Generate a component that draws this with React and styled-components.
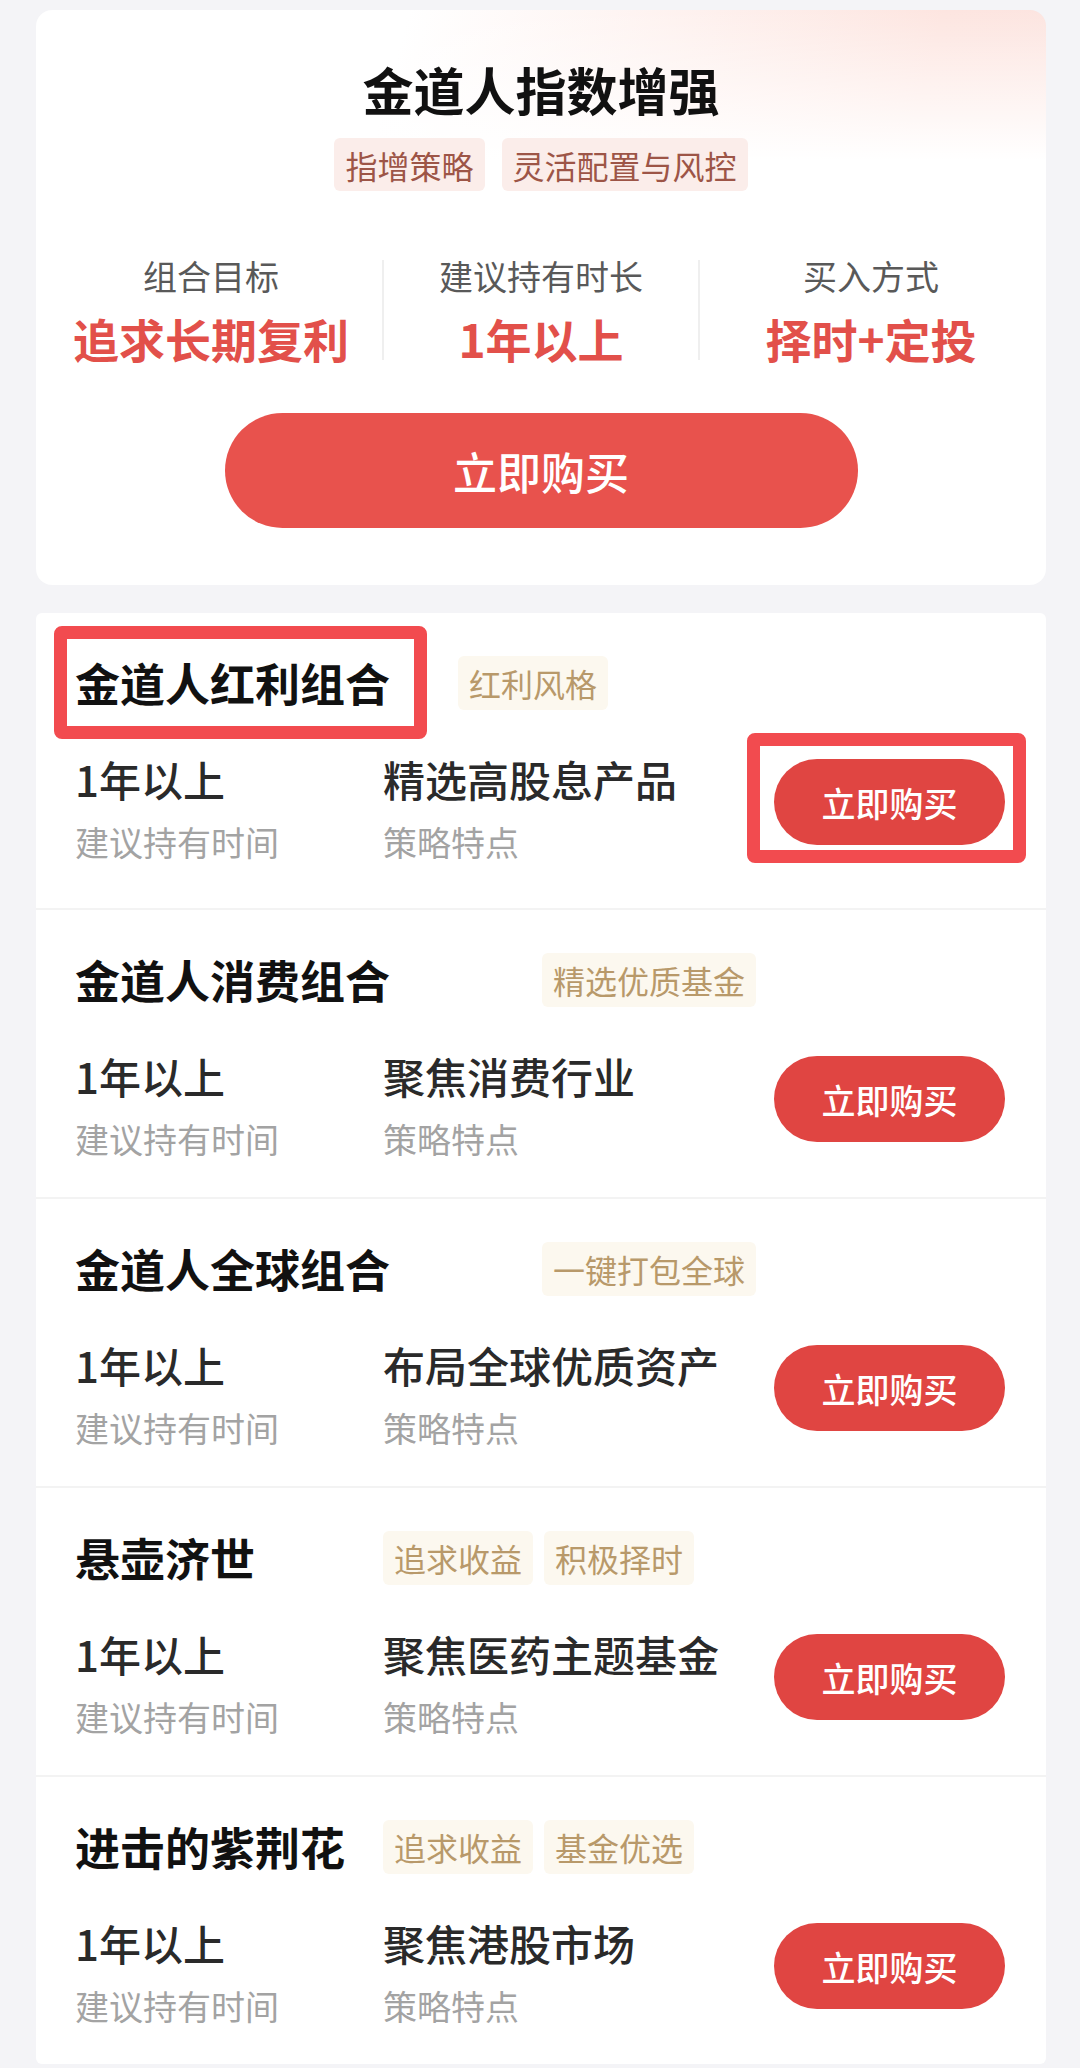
import React from 'react';
import styled, { createGlobalStyle } from 'styled-components';

const GlobalStyle = createGlobalStyle`
  html, body { margin: 0; padding: 0; background: #f4f4f7; }
  body {
    font-family: "Noto Sans CJK SC", "Noto Sans", sans-serif;
    -webkit-font-smoothing: antialiased;
  }
  * { box-sizing: border-box; }
`;

const Page = styled.div`
  width: 1080px;
  min-height: 2068px;
  padding: 10px 34px 0 36px;
  display: flex;
  flex-direction: column;
  gap: 28px;
  background: #f4f4f7;
`;

const HeroCard = styled.section`
  border-radius: 16px;
  padding: 44px 32px 57px;
  display: flex;
  flex-direction: column;
  align-items: center;
  background:
    linear-gradient(180deg, rgba(255, 255, 255, 0) 0px, #ffffff 150px),
    linear-gradient(105deg, #ffffff 32%, #fde5e0 78%, #fbe4e0 100%);
`;

const HeroTitle = styled.h1`
  margin: 0;
  font-size: 51px;
  line-height: 70px;
  font-weight: 700;
  color: #111;
`;

const TagRow = styled.div`
  display: flex;
  gap: ${(p) => p.$gap}px;
  margin-top: ${(p) => p.$top || 0}px;
  margin-left: ${(p) => p.$offset || 0}px;
`;

const Tag = styled.span`
  display: inline-flex;
  align-items: center;
  height: ${(p) => (p.$tone === 'rose' ? 53 : 54)}px;
  padding: 0 11px;
  border-radius: 6px;
  font-size: 32px;
  font-weight: 400;
  white-space: nowrap;
  color: ${(p) => (p.$tone === 'rose' ? '#9d5547' : '#b8996a')};
  background: ${(p) => (p.$tone === 'rose' ? '#fbedea' : '#fcf8ef')};
`;

const Stats = styled.div`
  width: 100%;
  margin-top: 61px;
  display: grid;
  grid-template-columns: 1fr 2px 1fr 2px 1fr;
  align-items: center;
`;

const Stat = styled.div`
  display: flex;
  flex-direction: column;
  align-items: center;
  padding: ${(p) =>
    p.$edge === 'start' ? '0 28px 0 0' : p.$edge === 'end' ? '0 0 0 28px' : '0'};
`;

const StatLabel = styled.div`
  font-size: 34px;
  line-height: 48px;
  color: #595959;
`;

const StatValue = styled.div`
  margin-top: 8px;
  font-size: 46px;
  line-height: 60px;
  font-weight: 700;
  color: #e2504a;
  white-space: nowrap;
`;

const StatDivider = styled.div`
  width: 2px;
  height: 100px;
  background: #efefef;
`;

const HeroButton = styled.button`
  margin-top: 45px;
  width: 633px;
  height: 115px;
  border: none;
  border-radius: 58px;
  background: #e8524d;
  color: #fff;
  font-family: inherit;
  font-size: 44px;
  font-weight: 500;
`;

const ListCard = styled.section`
  background: #fff;
  border-radius: 6px;
  display: flex;
  flex-direction: column;
`;

const Row = styled.div`
  padding: 38px 41px 34px 39px;
  border-bottom: 2px solid #f3f3f3;
  &:first-child { padding-bottom: 42px; }
  &:last-child { border-bottom: none; }
`;

const TitleLine = styled.div`
  display: flex;
  align-items: center;
  height: 64px;
`;

const TitleCell = styled.div`
  position: relative;
  display: flex;
  align-items: center;
  min-width: 308px;
`;

const ItemTitle = styled.h2`
  margin: 0;
  font-size: 45px;
  line-height: 64px;
  font-weight: 700;
  color: #111;
  white-space: nowrap;
`;

const Body = styled.div`
  display: grid;
  grid-template-columns: 308px 1fr 231px;
  margin-top: 36px;
`;

const Col = styled.div`
  display: flex;
  flex-direction: column;
`;

const Value = styled.div`
  font-size: 42px;
  line-height: 56px;
  font-weight: 500;
  color: #2a2a2a;
  white-space: nowrap;
`;

const Sub = styled.div`
  margin-top: 11px;
  font-size: 34px;
  line-height: 48px;
  color: #a3a3a3;
`;

const ButtonCell = styled.div`
  position: relative;
  align-self: start;
  margin-top: 8px;
`;

const RowButton = styled.button`
  display: block;
  width: 231px;
  height: 86px;
  border: none;
  border-radius: 43px;
  background: #e04542;
  color: #fff;
  font-family: inherit;
  font-size: 34px;
  font-weight: 500;
`;

const Frame = styled.span`
  position: absolute;
  top: ${(p) => p.$t}px;
  right: ${(p) => p.$r}px;
  bottom: ${(p) => p.$b}px;
  left: ${(p) => p.$l}px;
  border: 13px solid #f24b4f;
  border-radius: 8px;
  pointer-events: none;
`;

const items = [
  {
    title: '金道人红利组合',
    tags: ['红利风格'],
    offset: 68,
    feature: '精选高股息产品',
    marked: true,
  },
  { title: '金道人消费组合', tags: ['精选优质基金'], offset: 152, feature: '聚焦消费行业' },
  { title: '金道人全球组合', tags: ['一键打包全球'], offset: 152, feature: '布局全球优质资产' },
  { title: '悬壶济世', tags: ['追求收益', '积极择时'], offset: 0, feature: '聚焦医药主题基金' },
  { title: '进击的紫荆花', tags: ['追求收益', '基金优选'], offset: 0, feature: '聚焦港股市场' },
];

export default function App() {
  return (
    <>
      <GlobalStyle />
      <Page>
        <HeroCard>
          <HeroTitle>金道人指数增强</HeroTitle>
          <TagRow $gap={17} $top={14}>
            <Tag $tone="rose">指增策略</Tag>
            <Tag $tone="rose">灵活配置与风控</Tag>
          </TagRow>
          <Stats>
            <Stat $edge="start">
              <StatLabel>组合目标</StatLabel>
              <StatValue>追求长期复利</StatValue>
            </Stat>
            <StatDivider />
            <Stat>
              <StatLabel>建议持有时长</StatLabel>
              <StatValue>1年以上</StatValue>
            </Stat>
            <StatDivider />
            <Stat $edge="end">
              <StatLabel>买入方式</StatLabel>
              <StatValue>择时+定投</StatValue>
            </Stat>
          </Stats>
          <HeroButton>立即购买</HeroButton>
        </HeroCard>

        <ListCard>
          {items.map((it) => (
            <Row key={it.title}>
              <TitleLine>
                <TitleCell>
                  <ItemTitle>{it.title}</ItemTitle>
                  {it.marked && <Frame $t={-25} $r={-37} $b={-24} $l={-21} />}
                </TitleCell>
                <TagRow $gap={11} $offset={it.offset}>
                  {it.tags.map((t) => (
                    <Tag key={t} $tone="gold">{t}</Tag>
                  ))}
                </TagRow>
              </TitleLine>
              <Body>
                <Col>
                  <Value>1年以上</Value>
                  <Sub>建议持有时间</Sub>
                </Col>
                <Col>
                  <Value>{it.feature}</Value>
                  <Sub>策略特点</Sub>
                </Col>
                <ButtonCell>
                  <RowButton>立即购买</RowButton>
                  {it.marked && <Frame $t={-26} $r={-21} $b={-18} $l={-27} />}
                </ButtonCell>
              </Body>
            </Row>
          ))}
        </ListCard>
      </Page>
    </>
  );
}
